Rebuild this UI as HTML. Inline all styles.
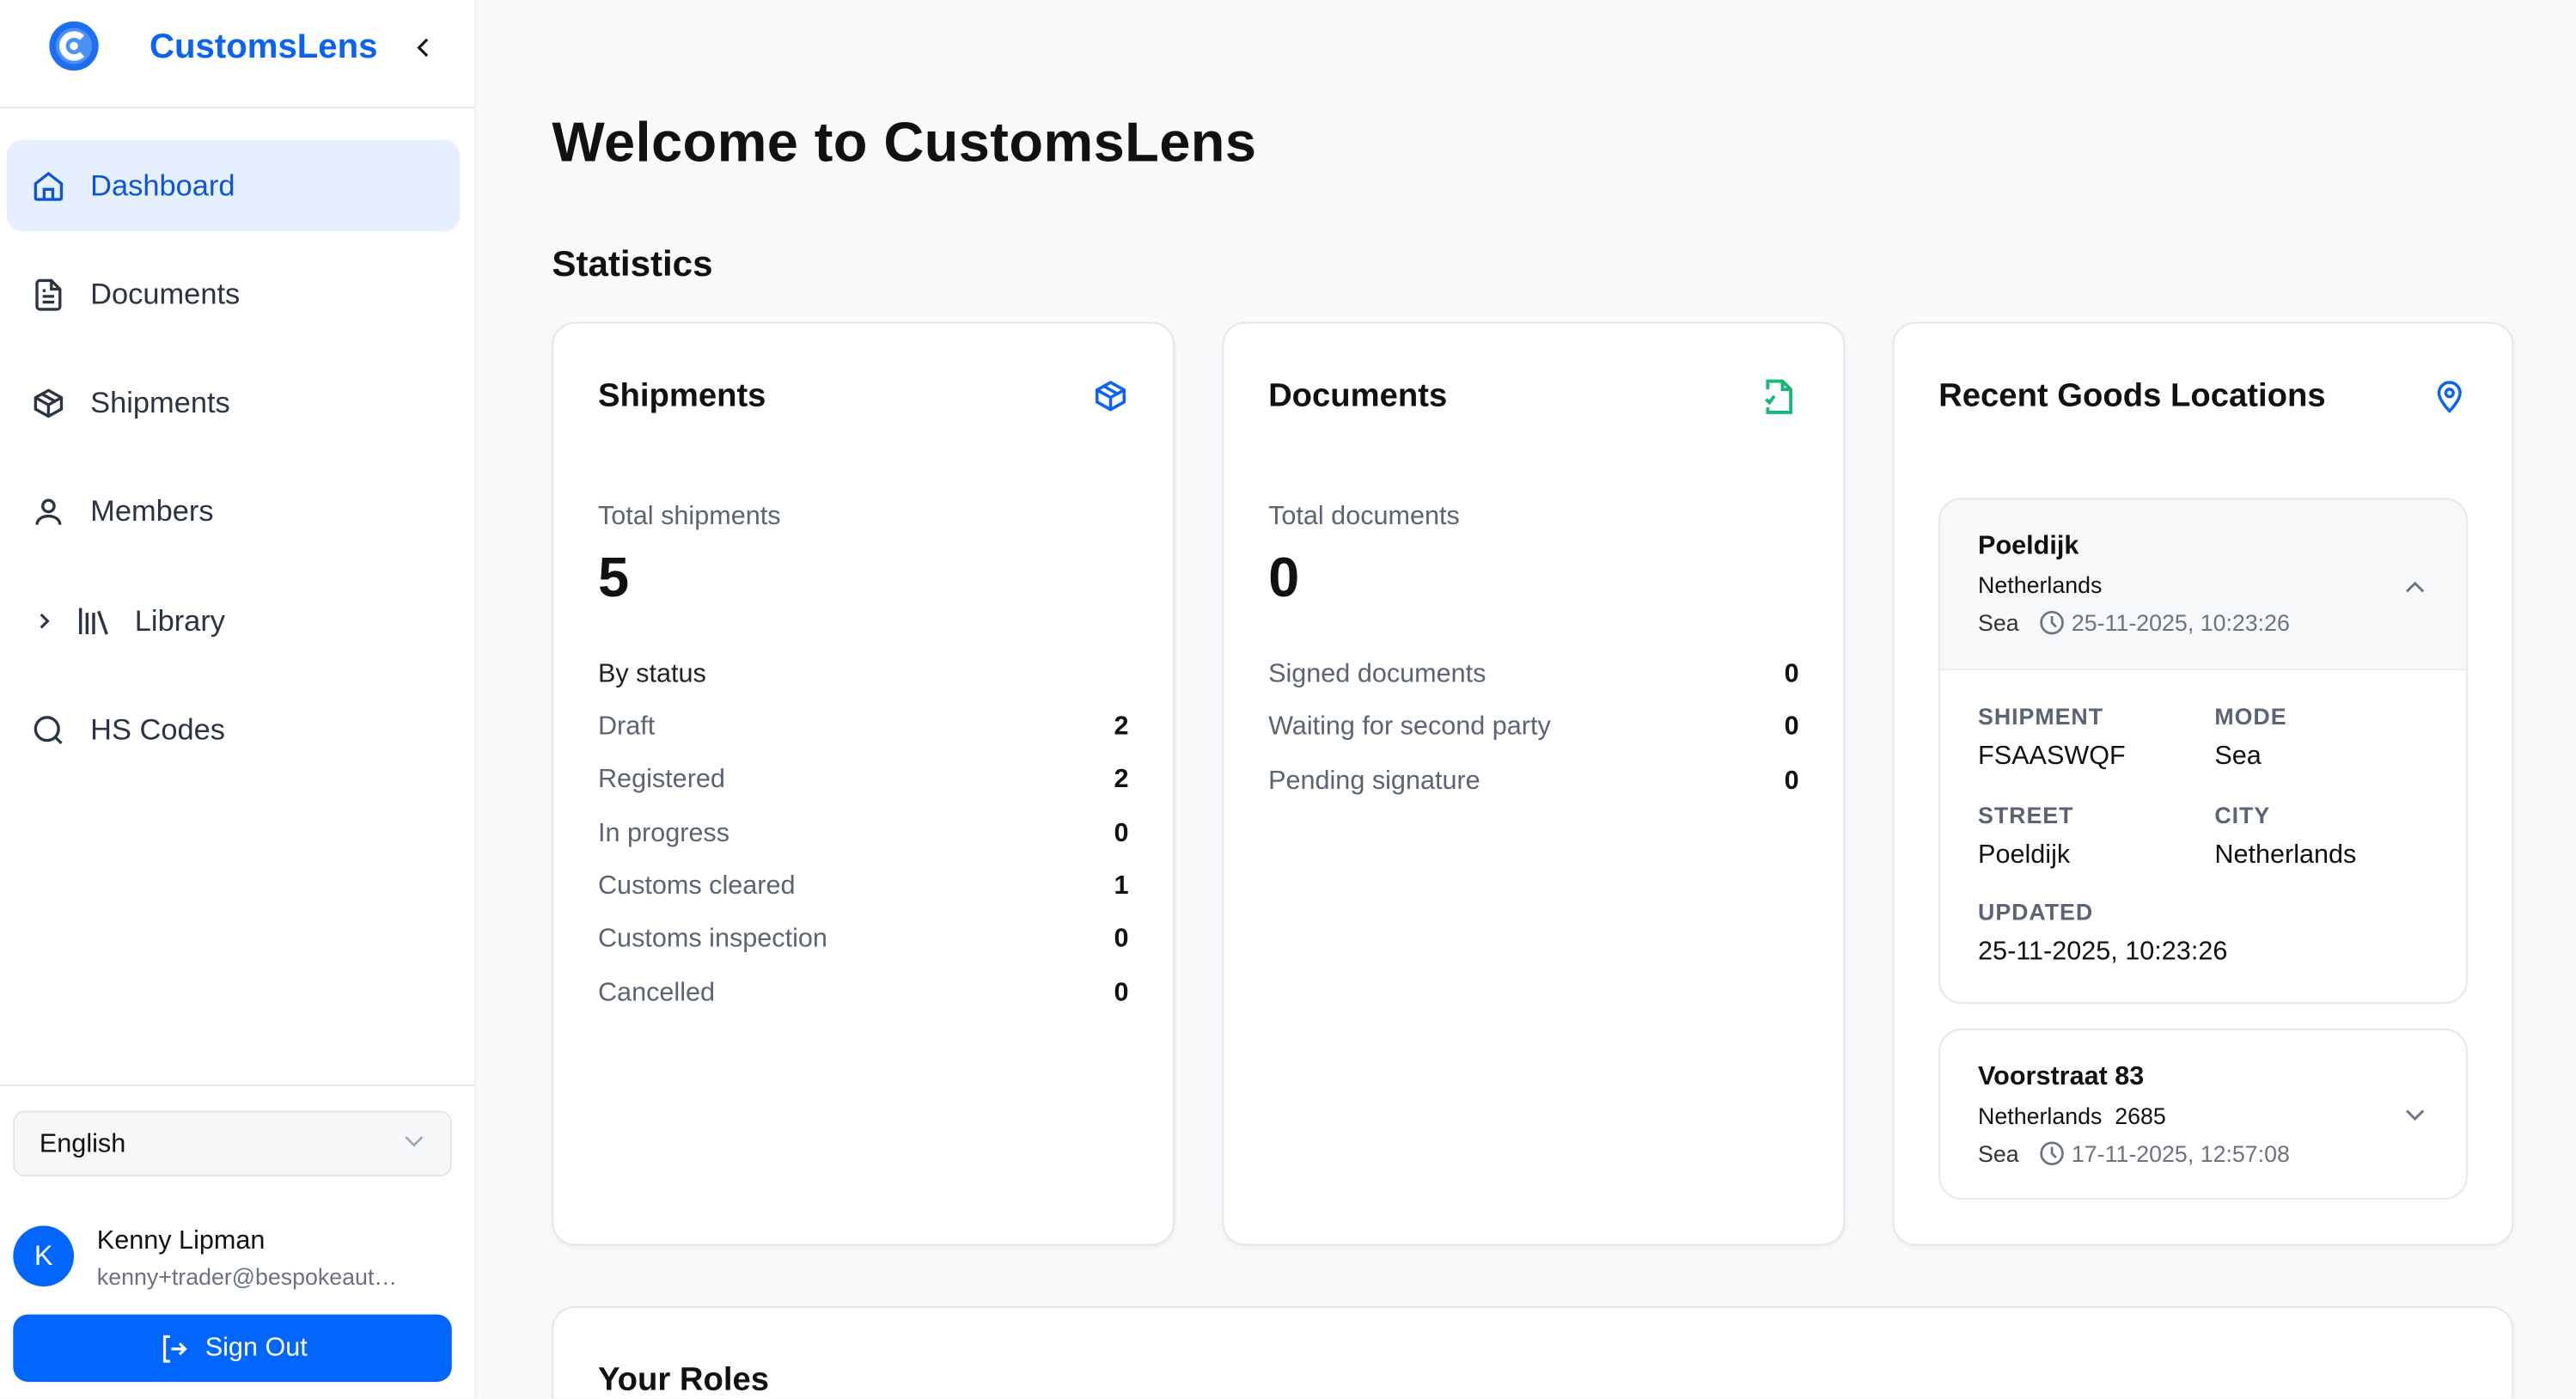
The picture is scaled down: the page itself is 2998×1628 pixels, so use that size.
<!DOCTYPE html>
<html><head><meta charset="utf-8"><style>
*{box-sizing:border-box;margin:0;padding:0}
html,body{width:2998px;height:1628px;overflow:hidden;background:#f8f9fb}
#w{position:absolute;left:0;top:0;width:1568px;height:851px;transform:scale(1.912);transform-origin:0 0;overflow:hidden;background:#f8f9fb;font-family:"Liberation Sans",Arial,sans-serif;color:#111}
.a{position:absolute}
.side{left:0;top:0;width:290px;height:851px;background:#fff;border-right:1px solid #eceef1}
.nav{left:4px;width:276px;height:56px;display:flex;align-items:center;padding-left:15px;font-size:18px;color:#2b3443}
.nav svg{margin-right:15px}
.card{background:#fff;border:1px solid #e3e6ea;border-radius:14px;box-shadow:0 1px 3px rgba(0,0,0,.05)}
.ct{font-size:20px;font-weight:bold;color:#111}
.row{display:flex;justify-content:space-between;font-size:16px;color:#5b6472;height:32.3px;align-items:center}
.row b{color:#111}
.lbl{font-size:14px;font-weight:bold;color:#5b6472;letter-spacing:.5px}
.val{font-size:16px;color:#111}
.clk{display:inline-block;vertical-align:-3px;margin:0 4px 0 12px}
</style></head><body><div id="w">
<div class="a side">
 <div class="a" style="left:0;top:65px;width:289px;height:1px;background:#e5e7eb"></div>
 <svg class="a" style="left:29px;top:12px" width="32" height="32" viewBox="0 0 32 32"><circle cx="16" cy="16" r="15" fill="#1d6ff2"/><circle cx="16" cy="16" r="11" fill="#4b90f7"/><path d="M21 11a7 7 0 1 0 0 10" stroke="#fff" stroke-width="4" fill="none"/><circle cx="16" cy="16" r="2.5" fill="#fff"/></svg>
 <div class="a" style="left:91px;top:17px;font-size:21px;font-weight:bold;color:#0b63f3">CustomsLens</div>
 <svg class="a" style="left:252px;top:22px" width="12" height="14" viewBox="0 0 12 14"><path d="M8 2L3 7l5 5" stroke="#111" stroke-width="1.6" fill="none"/></svg>
 <div class="a nav" style="top:85px;background:#e6effd;border-radius:10px;color:#0b55d9"><svg width="21" height="21" viewBox="0 0 24 24" fill="none" stroke="#0b55d9" stroke-width="2"><path d="M3 10l9-7 9 7v10a1 1 0 0 1-1 1H4a1 1 0 0 1-1-1z"/><path d="M9 21v-7h6v7"/></svg>Dashboard</div>
 <div class="a nav" style="top:151px"><svg width="21" height="21" viewBox="0 0 24 24" fill="none" stroke="#2b3443" stroke-width="2"><path d="M14 2H6a2 2 0 0 0-2 2v16a2 2 0 0 0 2 2h12a2 2 0 0 0 2-2V8z"/><path d="M14 2v6h6M8 13h8M8 17h8M8 9h2"/></svg>Documents</div>
 <div class="a nav" style="top:217px"><svg width="21" height="21" viewBox="0 0 24 24" fill="none" stroke="#2b3443" stroke-width="2"><path d="M21 8l-9-5-9 5v8l9 5 9-5z"/><path d="M3 8l9 5 9-5M12 13v8M7.5 5.5l9 5"/></svg>Shipments</div>
 <div class="a nav" style="top:283px"><svg width="21" height="21" viewBox="0 0 24 24" fill="none" stroke="#2b3443" stroke-width="2"><circle cx="12" cy="8" r="4"/><path d="M4 21c0-4 4-6 8-6s8 2 8 6"/></svg>Members</div>
 <div class="a nav" style="top:350px;padding-left:18px"><svg width="10" height="12" viewBox="0 0 10 12" style="margin-right:15px"><path d="M3 2l4 4-4 4" stroke="#2b3443" stroke-width="1.6" fill="none"/></svg><svg width="20" height="20" viewBox="0 0 20 20" fill="none" stroke="#2b3443" stroke-width="1.8" style="margin-right:15px"><path d="M2 2v16M6 5v13M10 5v13M13 4l5 14"/></svg>Library</div>
 <div class="a nav" style="top:416px"><svg width="21" height="21" viewBox="0 0 24 24" fill="none" stroke="#2b3443" stroke-width="2"><circle cx="11" cy="11" r="8"/><path d="M21 21l-4.3-4.3"/></svg>HS Codes</div>
 <div class="a" style="left:0;top:660px;width:289px;height:1px;background:#e5e7eb"></div>
 <div class="a" style="left:8px;top:676px;width:267px;height:40px;background:#f6f7f9;border:1px solid #e1e5ea;border-radius:7px;font-size:16px;padding:11px 0 0 15px">English<svg class="a" style="right:16px;top:14px" width="12" height="8" viewBox="0 0 12 8"><path d="M1 1l5 5 5-5" stroke="#a0a7b2" stroke-width="1.4" fill="none"/></svg></div>
 <div class="a" style="left:8px;top:746px;width:37px;height:37px;border-radius:50%;background:#0066ff;color:#fff;font-size:17px;text-align:center;line-height:37px">K</div>
 <div class="a" style="left:59px;top:747px;font-size:16px">Kenny Lipman</div>
 <div class="a" style="left:59px;top:769px;font-size:14px;color:#6b7280">kenny+trader@bespokeaut…</div>
 <div class="a" style="left:8px;top:800px;width:267px;height:41px;background:#0066ff;border-radius:9px;color:#fff;font-size:16px;display:flex;align-items:center;justify-content:center"><svg width="20" height="20" viewBox="0 0 24 24" fill="none" stroke="#fff" stroke-width="2" style="margin-right:9px"><path d="M9 3H5v18h4M10 12h10M16 8l4 4-4 4"/></svg>Sign Out</div>
</div>

<div class="a" style="left:336px;top:68px;font-size:34px;font-weight:bold;letter-spacing:.2px">Welcome to CustomsLens</div>
<div class="a" style="left:336px;top:148px;font-size:22px;font-weight:bold">Statistics</div>

<div class="a card" style="left:336px;top:196px;width:379px;height:562px">
 <div class="a ct" style="left:27px;top:33px">Shipments</div>
 <svg class="a" style="left:328px;top:33px" width="22" height="22" viewBox="0 0 24 24" fill="none" stroke="#0b63f3" stroke-width="2"><path d="M21 8l-9-5-9 5v8l9 5 9-5z"/><path d="M3 8l9 5 9-5M12 13v8M7.5 5.5l9 5"/></svg>
 <div class="a" style="left:27px;top:109px;font-size:16px;color:#5b6472">Total shipments</div>
 <div class="a" style="left:27px;top:136px;font-size:34px;font-weight:bold">5</div>
 <div class="a" style="left:27px;top:205px;font-size:16px;color:#222">By status</div>
 <div class="a" style="left:27px;top:230px;width:323px">
  <div class="row">Draft<b>2</b></div><div class="row">Registered<b>2</b></div><div class="row">In progress<b>0</b></div><div class="row">Customs cleared<b>1</b></div><div class="row">Customs inspection<b>0</b></div><div class="row">Cancelled<b>0</b></div>
 </div>
</div>

<div class="a card" style="left:744px;top:196px;width:379px;height:562px">
 <div class="a ct" style="left:27px;top:33px">Documents</div>
 <svg class="a" style="left:327px;top:32px" width="22" height="24" viewBox="0 0 22 24" fill="none" stroke="#17b877" stroke-width="2"><path d="M4 8V3h9l5 5v14H4v-3"/><path d="M13 3v5h5M3 14l2 2 3-4"/></svg>
 <div class="a" style="left:27px;top:109px;font-size:16px;color:#5b6472">Total documents</div>
 <div class="a" style="left:27px;top:136px;font-size:34px;font-weight:bold">0</div>
 <div class="a" style="left:27px;top:198px;width:323px">
  <div class="row">Signed documents<b>0</b></div><div class="row">Waiting for second party<b>0</b></div><div class="row">Pending signature<b>0</b></div>
 </div>
</div>

<div class="a card" style="left:1152px;top:196px;width:378px;height:562px">
 <div class="a ct" style="left:27px;top:33px">Recent Goods Locations</div>
 <svg class="a" style="left:327px;top:32px" width="22" height="24" viewBox="0 0 24 24" fill="none" stroke="#0b63f3" stroke-width="2"><path d="M12 22s7-7 7-12a7 7 0 0 0-14 0c0 5 7 12 7 12z"/><circle cx="12" cy="10" r="2.5"/></svg>
 <div class="a" style="left:27px;top:106px;width:322px;height:308px;border:1px solid #e3e6ea;border-radius:14px;overflow:hidden;background:#fff">
  <div style="height:104px;background:#f7f8fa;border-bottom:1px solid #eceef1;padding:20px 0 0 23px;position:relative">
   <div style="font-size:16px;font-weight:bold">Poeldijk</div>
   <div style="font-size:14px;margin-top:6px">Netherlands</div>
   <div style="font-size:14px;margin-top:7px;color:#333">Sea<svg class="clk" width="16" height="16" viewBox="0 0 16 16" fill="none" stroke="#6b7280" stroke-width="1.4"><circle cx="8" cy="8" r="6.5"/><path d="M8 4v4l2.5 2.5"/></svg><span style="color:#6b7280">25-11-2025, 10:23:26</span></div>
   <svg class="a" style="left:282px;top:48px" width="14" height="10" viewBox="0 0 14 10"><path d="M2 8l5-5 5 5" stroke="#6b7280" stroke-width="1.5" fill="none"/></svg>
  </div>
  <div class="a lbl" style="left:23px;top:124px">SHIPMENT</div><div class="a lbl" style="left:167px;top:124px">MODE</div>
  <div class="a val" style="left:23px;top:148px">FSAASWQF</div><div class="a val" style="left:167px;top:148px">Sea</div>
  <div class="a lbl" style="left:23px;top:184px">STREET</div><div class="a lbl" style="left:167px;top:184px">CITY</div>
  <div class="a val" style="left:23px;top:208px">Poeldijk</div><div class="a val" style="left:167px;top:208px">Netherlands</div>
  <div class="a lbl" style="left:23px;top:243px">UPDATED</div>
  <div class="a val" style="left:23px;top:267px">25-11-2025, 10:23:26</div>
 </div>
 <div class="a" style="left:27px;top:429px;width:322px;height:104px;border:1px solid #e3e6ea;border-radius:14px;background:#fff;padding:20px 0 0 23px">
  <div style="font-size:16px;font-weight:bold">Voorstraat 83</div>
  <div style="font-size:14px;margin-top:6px">Netherlands&nbsp; 2685</div>
  <div style="font-size:14px;margin-top:7px;color:#333">Sea<svg class="clk" width="16" height="16" viewBox="0 0 16 16" fill="none" stroke="#6b7280" stroke-width="1.4"><circle cx="8" cy="8" r="6.5"/><path d="M8 4v4l2.5 2.5"/></svg><span style="color:#6b7280">17-11-2025, 12:57:08</span></div>
  <svg class="a" style="left:282px;top:47px" width="14" height="10" viewBox="0 0 14 10"><path d="M2 2l5 5 5-5" stroke="#6b7280" stroke-width="1.5" fill="none"/></svg>
 </div>
</div>

<div class="a card" style="left:336px;top:795px;width:1194px;height:56px;border-bottom:none;border-radius:14px 14px 0 0">
 <div class="a ct" style="left:27px;top:33px">Your Roles</div>
</div>
</div></body></html>
